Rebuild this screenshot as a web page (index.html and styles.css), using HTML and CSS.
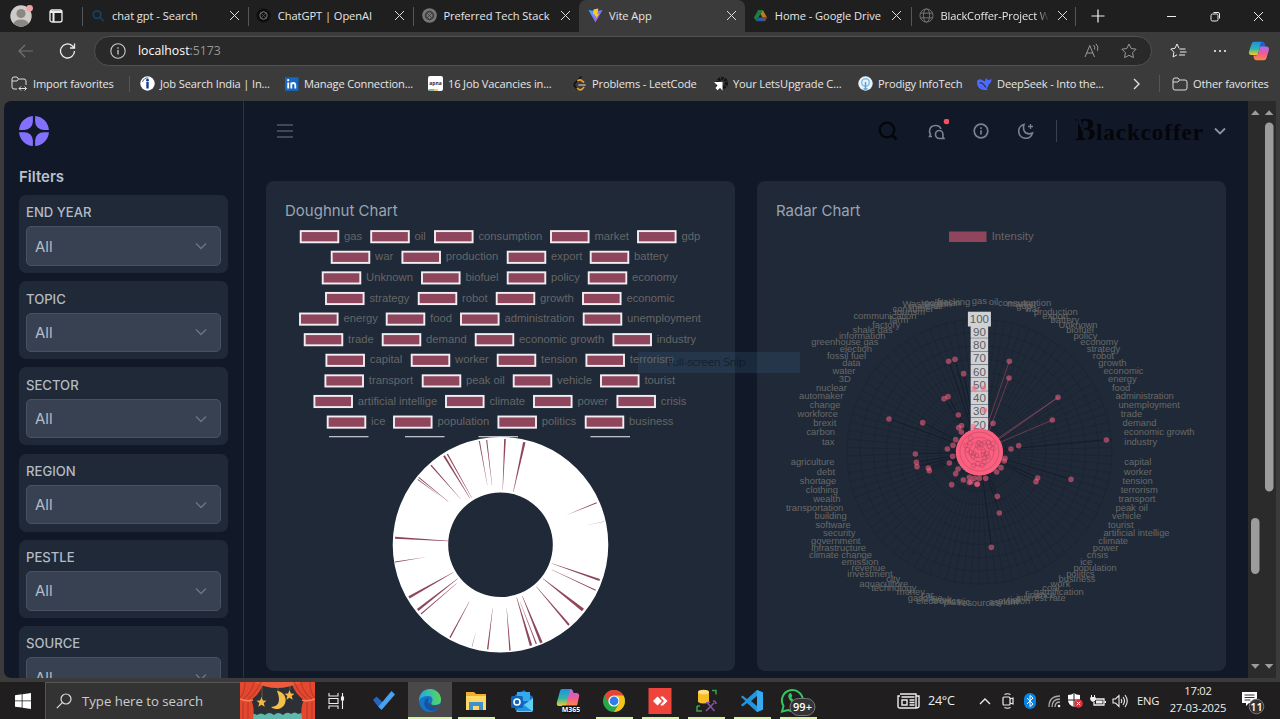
FILE: index.html
```html
<!DOCTYPE html>
<html lang="en">
<head>
<meta charset="utf-8">
<title>Vite App</title>
<link rel="stylesheet" href="styles.css">
</head>
<body>
<div class="screen">
  <header class="tabs">
    <div class="tabs-start">
      <svg width="24" height="24" viewBox="0 0 24 24"><circle cx="12" cy="12" r="10.7" fill="#cfccc8"/><circle cx="12" cy="9.5" r="4.6" fill="#8b8784"/><path d="M4.500 19.500Q6 15.500 12 15.500T19.500 19.500Q16 22.500 12 22.500T4.500 19.500" fill="#8b8784"/><circle cx="20.600" cy="4.300" r="3.300" fill="#f1a3a3"/></svg>
      <svg class="workspaces" width="14" height="14" viewBox="0 0 14 14" fill="none" stroke="#eee" stroke-width="1.300"><rect x="1" y="1" width="12" height="12" rx="2"/><path d="M1 3h12M4.500 4v9" stroke-width="2"/></svg>
    </div>
    <div class="tab"><svg class="ti" viewBox="0 0 16 16" fill="none" stroke="#163f60" stroke-width="2"><circle cx="6.500" cy="7" r="4"/><path d="M9.500 10l4 4"/></svg><span class="tt">chat gpt - Search</span><i class="x"></i></div>
    <div class="tab"><svg class="ti" viewBox="0 0 16 16"><circle cx="8" cy="8" r="7.500" fill="#0e0e0e"/><g fill="none" stroke="#666"><circle cx="8" cy="8" r="4"/><path d="M8 4l3.500 2v4L8 12l-3.500-2V6zM5 5l6 6M11 5l-6 6" stroke-width=".7"/></g></svg><span class="tt">ChatGPT | OpenAI</span><i class="x"></i></div>
    <div class="tab nosep"><svg class="ti" viewBox="0 0 16 16"><circle cx="8" cy="8" r="7.800" fill="#777"/><g fill="none" stroke="#333"><circle cx="8" cy="8" r="4.500"/><path d="M8 4l3.500 2v4L8 12l-3.500-2V6zM5 5l6 6M11 5l-6 6" stroke-width=".8"/></g></svg><span class="tt">Preferred Tech Stack</span><i class="x"></i></div>
    <div class="tab active"><svg class="ti" viewBox="0 0 16 16"><defs><linearGradient id="v" x1="0" y1="0" x2="1" y2="1"><stop offset="0" stop-color="#35b7ff"/><stop offset="1" stop-color="#bd34fe"/></linearGradient></defs><path d="M.5 2L8 15.500 15.500 2 8 3.500z" fill="url(#v)"/><path d="M11 .5L5.800 1.500 5.500 7l2-.4L7 9l1.800-.4L8 12l4-6-2 .3z" fill="#ffc91c"/></svg><span class="tt">Vite App</span><i class="x"></i></div>
    <div class="tab"><svg class="ti" viewBox="0 0 16 16"><path d="M5.500 2h5L8 6.500 3.500 14 1 10z" fill="#1e7d45"/><path d="M10.500 2L15 10h-5L8 6.500z" fill="#b5801c"/><path d="M6 10h9l-2.500 4h-9z" fill="#2c5ca5"/><path d="M11.500 10H15l-2.500 4z" fill="#a3382f"/></svg><span class="tt">Home - Google Drive</span><i class="x"></i></div>
    <div class="tab last"><svg class="ti" viewBox="0 0 16 16" fill="none" stroke="#777"><circle cx="8" cy="8" r="7"/><ellipse cx="8" cy="8" rx="3.300" ry="7"/><path d="M1.500 5.500h13M1.500 10.500h13"/></svg><span class="tt fade">BlackCoffer-Project W</span><i class="x"></i></div>
    <svg class="plus" width="14" height="14" viewBox="0 0 14 14" stroke="#eee" stroke-width="1.200"><path d="M7 .5v13M.5 7h13"/></svg>
    <div class="win">
      <svg width="11" height="11" viewBox="0 0 11 11" stroke="#eee"><path d="M1 5.500h9"/></svg>
      <svg width="11" height="11" viewBox="0 0 11 11" fill="none" stroke="#eee"><rect x="1" y="3" width="7" height="7" rx="1.500"/><path d="M3.500 1.500H8Q9.500 1.500 9.500 3v4.500"/></svg>
      <svg width="11" height="11" viewBox="0 0 11 11" stroke="#eee"><path d="M1 1l9 9M10 1l-9 9"/></svg>
    </div>
  </header>

  <div class="toolbar">
    <svg class="back" width="18" height="16" viewBox="0 0 18 16" fill="none" stroke="#737373" stroke-width="1.200"><path d="M16 8H2M8 2L2 8l6 6"/></svg>
    <svg class="reload" width="18" height="18" viewBox="0 0 18 18" fill="none" stroke="#eee" stroke-width="1.300"><path d="M15.500 9a7 7 0 1 1-2.300-5.200L15.300 6"/><path d="M15.500 1.500V6H11"/></svg>
    <div class="address">
      <svg width="16" height="16" viewBox="0 0 16 16" fill="none" stroke="#ccc" stroke-width="1.100"><circle cx="8" cy="8" r="7.200"/><path d="M8 7v4.500M8 4.300v1.400" stroke-width="1.300"/></svg>
      <span class="url">localhost<b>:5173</b></span>
      <svg class="aloud" width="16" height="16" viewBox="0 0 16 16" fill="none" stroke="#999"><path d="M1 14L5.800 2.500 10.500 14M2.600 10h6.500M9.500 2q2 2 1 4.500M12 .8q3 3 1.500 7"/></svg>
      <svg width="16" height="16" viewBox="0 0 16 16" fill="none" stroke="#999"><path d="M8 1l2.200 4.500 4.900.7-3.500 3.500.8 4.900L8 12.300l-4.400 2.300.8-4.900L.9 6.200l4.900-.7z"/></svg>
    </div>
    <svg class="favs" width="17" height="16" viewBox="0 0 17 16" fill="none" stroke="#eee"><path d="M9 5.300L7 1 5 5.300.8 6l3.100 3.200-.8 4.800L7 11.800M9.500 6h6M10 9h6.500M9 12h6"/></svg>
    <svg class="dots" width="14" height="4" viewBox="0 0 14 4" fill="#eee"><circle cx="2" cy="2" r="1.100"/><circle cx="7" cy="2" r="1.100"/><circle cx="12" cy="2" r="1.100"/></svg>
    <svg class="copilot" width="22" height="20" viewBox="0 0 22 20"><defs><linearGradient id="c1" x2="0" y2="1"><stop stop-color="#1793e8"/><stop offset=".55" stop-color="#35b5a0"/><stop offset="1" stop-color="#f6cb2c"/></linearGradient><linearGradient id="c2" x2="0" y2="1"><stop stop-color="#a66cf0"/><stop offset=".5" stop-color="#f05a9a"/><stop offset="1" stop-color="#ff8a3c"/></linearGradient></defs><path d="M6 .8h8q2 0 2.600 2l.7 2.600h-3q-2 0-2.600 2L9.500 14H3.300Q.5 14 1 10.500L3.500 3Q4.200.8 6 .8" fill="url(#c1)"/><path d="M14 .8q2 0 2.600 2l.7 2.600h-3q-2 0-2.600 2L12 3z" fill="#1c62c8"/><path d="M16 19.200H8.500q-2 0-2.600-2l-.5-2.600h2.200q2 0 2.600-2l2.200-7h6q3 0 2.500 3.500L18.500 17q-.7 2.200-2.500 2.200" fill="url(#c2)"/></svg>
  </div>

  <nav class="bookmarks">
    <div><svg width="17" height="15" viewBox="0 0 17 15" fill="none" stroke="#ddd"><path d="M6 13H3Q1 13 1 11V3Q1 1 3 1h3l1.500 2H13q2 0 2 2v4M1 5h5l1.500-2M8 12.500h7.500M10 10.500l-2 2 2 2M13.500 10.500l2 2-2 2"/></svg><span>Import favorites</span><i class="bar"></i></div>
    <div><svg width="15" height="15" viewBox="0 0 15 15"><circle cx="7.500" cy="7.500" r="7.200" fill="#fff"/><path d="M7.500 6v6.500" stroke="#163d8c" stroke-width="2.400"/><circle cx="7.500" cy="4.200" r="1.400" fill="#163d8c"/><path d="M2.500 6Q4 1.300 8.500 2" fill="none" stroke="#3a65b5"/></svg><span>Job Search India | In...</span></div>
    <div><svg width="14" height="14" viewBox="0 0 14 14"><rect width="13.500" height="13.500" y=".3" fill="#1369c4"/><path d="M3.200 5.500v6M6.300 5.500v6M6.300 8q.2-2 2-2t2 2v3.500" fill="none" stroke="#fff" stroke-width="1.800"/><circle cx="3.200" cy="3.200" r="1.100" fill="#fff"/></svg><span>Manage Connection...</span></div>
    <div><svg width="15" height="15" viewBox="0 0 15 15"><rect width="15" height="15" rx="2" fill="#fff"/><path d="M1 14h5" stroke="#2db58c" stroke-width="1.500"/><path d="M6 14h4" stroke="#f0b33e" stroke-width="1.500"/><text x="7.500" y="9" class="apna">apna</text></svg><span>16 Job Vacancies in...</span></div>
    <div><svg width="14" height="15" viewBox="0 0 14 15" fill="none" stroke-linecap="round" stroke-width="1.700"><path d="M8 1L2 7Q.5 9 2 10.500l2 2.500" stroke="#111"/><path d="M5 4.500q2-1.500 4 .3l1.500 1.200M4.500 12.500q2.500 2.500 4.700.5l1.500-1.500" stroke="#f0a020"/><path d="M6 9h6" stroke="#aaa"/></svg><span>Problems - LeetCode</span></div>
    <div><svg width="14" height="15" viewBox="0 0 14 15"><circle cx="8" cy="7" r="4.500" fill="none" stroke="#151515" stroke-width="3.500" stroke-dasharray="2.500 .8"/><path d="M0 6h8.500v8.500L6 12l-2.500 2.300L1.500 12 3.500 9.500z" fill="#fff"/></svg><span>Your LetsUpgrade C...</span></div>
    <div><svg width="15" height="15" viewBox="0 0 15 15"><circle cx="7.500" cy="7.500" r="7.200" fill="#e8f2fb"/><circle cx="7.500" cy="6.500" r="3.800" fill="none" stroke="#87bee8" stroke-width="1.500"/><path d="M7.500 6v7M5.500 13h4" stroke="#5d9ed3" stroke-width="1.500"/></svg><span>Prodigy InfoTech</span></div>
    <div><svg width="16" height="14" viewBox="0 0 16 14"><path d="M1 4Q3 1 6 3l3 1.500Q9 2 10.500 1q.5 2 2 2.200L15.500 2q0 4-2.500 5-.5 3-2.500 4.200l1.500 1.500Q6 14 3 11 .5 8 1 4" fill="#4d6bfe"/><path d="M3.500 6q3-1 6.500 4.500" fill="none" stroke="#333" stroke-width="1.200"/></svg><span>DeepSeek - Into the...</span></div>
    <div class="more"><svg width="10" height="12" viewBox="0 0 10 12" fill="none" stroke="#ddd" stroke-width="1.400"><path d="M2 1l5 5-5 5"/></svg></div>
    <div class="other"><svg width="16" height="14" viewBox="0 0 16 14" fill="none" stroke="#ddd"><path d="M1 3Q1 1 3 1h3l1.500 2H13q2 0 2 2v6q0 2-2 2H3q-2 0-2-2zM1 5h5l1.500-2"/></svg><span>Other favorites</span></div>
  </nav>

  <div class="viewport">
    <aside class="sidebar">
      <svg class="logo" width="30" height="30" viewBox="0 0 32 32"><path fill="#8470ff" d="M31.956 14.800C31.372 6.920 25.080.628 17.200.044V5.760a9.040 9.040 0 0 0 9.040 9.040h5.716ZM14.800 26.240v5.716C6.920 31.372.630 25.080.044 17.200H5.760a9.040 9.040 0 0 1 9.040 9.040Zm11.440-9.040h5.716c-.584 7.880-6.876 14.172-14.756 14.756V26.240a9.040 9.040 0 0 1 9.040-9.040ZM.044 14.800C.630 6.920 6.920.628 14.800.044V5.760a9.040 9.040 0 0 1-9.040 9.040H.044Z"/></svg>
      <h2>Filters</h2>
      <div class="filter"><label>END YEAR</label><div class="select">All<svg class="chev" viewBox="0 0 12 8"><path d="M1 1.500l5 5 5-5"/></svg></div></div>
      <div class="filter"><label>TOPIC</label><div class="select">All<svg class="chev" viewBox="0 0 12 8"><path d="M1 1.500l5 5 5-5"/></svg></div></div>
      <div class="filter"><label>SECTOR</label><div class="select">All<svg class="chev" viewBox="0 0 12 8"><path d="M1 1.500l5 5 5-5"/></svg></div></div>
      <div class="filter"><label>REGION</label><div class="select">All<svg class="chev" viewBox="0 0 12 8"><path d="M1 1.500l5 5 5-5"/></svg></div></div>
      <div class="filter"><label>PESTLE</label><div class="select">All<svg class="chev" viewBox="0 0 12 8"><path d="M1 1.500l5 5 5-5"/></svg></div></div>
      <div class="filter"><label>SOURCE</label><div class="select">All<svg class="chev" viewBox="0 0 12 8"><path d="M1 1.500l5 5 5-5"/></svg></div></div>
    </aside>
    <main class="content">
      <div class="topbar">
        <svg class="menu" width="16" height="14" viewBox="0 0 16 14" stroke="#515a69" stroke-width="1.500"><path d="M0 1h16M0 7h16M0 13h16"/></svg>
        <svg class="find" width="20" height="20" viewBox="0 0 20 20" fill="none" stroke="#04060b" stroke-width="2.200"><circle cx="9" cy="9" r="7.300"/><path d="M14.500 14.500l4 4" stroke-width="2.800"/></svg>
        <svg class="chat" width="24" height="24" viewBox="0 0 24 24" fill="none" stroke="#7b8391" stroke-width="1.600"><path d="M7 17.500H4.500l1-2.300Q4.300 13.500 4.500 12 5 6.500 10.500 6.500q4.300 0 5.500 3.500"/><path d="M10.500 15.200a3.700 3.700 0 0 1 7.400 0V18l1 1.500h-4.500A3.900 3.900 0 0 1 10.500 15.200z"/><circle cx="21.500" cy="2.500" r="2.800" fill="#f4525c" stroke="none"/></svg>
        <svg class="info" width="16" height="16" viewBox="0 0 16 16" fill="none" stroke="#7b8391" stroke-width="1.700"><circle cx="8" cy="8" r="6.800"/><path d="M8 7.300v4.200M8 4.300v1.800"/></svg>
        <svg class="moon" width="17" height="16" viewBox="0 0 17 16" fill="none" stroke="#7b8391" stroke-width="1.600"><path d="M6 1.500A7 7 0 1 0 14.500 10Q8 12.500 6 7.500 5 4 6 1.500z"/><path d="M12.500 1v5M10 3.500h5" stroke-width="1.300"/></svg>
        <i class="rule"></i>
        <div class="brand"><span class="b">B</span><span>lackcoffer</span></div>
        <svg class="caret" viewBox="0 0 12 8"><path d="M1 1.500l5 5 5-5"/></svg>
      </div>
      <div class="cards">
        <section class="card"><h3>Doughnut Chart</h3><svg id="doughnut" viewBox="266 225 469 445" width="469" height="445"></svg></section>
        <section class="card"><h3>Radar Chart</h3><svg id="radar" viewBox="757 225 469 445" width="469" height="445"></svg></section>
      </div>
    </main>
    <div class="scrolls">
      <svg width="32" height="577" viewBox="1248 101 32 577" fill="#9c9c9c"><path d="M1251 115l4.300-4.800 4.300 4.800zM1264.800 115l4.300-4.800 4.300 4.800zM1251 664l4.300 4.800 4.300-4.800zM1264.800 664l4.300 4.800 4.300-4.800z"/><rect x="1251" y="518" width="8.500" height="56" rx="4.200"/><rect x="1265" y="122.500" width="8.500" height="369" rx="4.200"/></svg>
    </div>
  </div>

  <footer class="taskbar">
    <div class="start"><svg width="16" height="16" viewBox="0 0 16 16" fill="#fff"><path d="M0 2.200L6.700 1.300v6.200H0zM7.500 1.200L16 0v7.500H7.500zM0 8.300h6.700v6.300L0 13.700zM7.500 8.300H16V16l-8.500-1.200z"/></svg></div>
    <div class="search">
      <svg width="16" height="16" viewBox="0 0 16 16" fill="none" stroke="#ddd" stroke-width="1.200"><circle cx="10" cy="6" r="5"/><path d="M6.300 9.700L.8 15.200"/></svg>
      <span>Type here to search</span>
      <svg class="scene" width="75" height="37" viewBox="0 0 75 37"><rect width="75" height="37" fill="#2d3035"/><path d="M22 0v16M38 0v10M50 0v8" stroke="#8a6c2b" stroke-width=".7"/><path d="M37 9a9 9 0 1 1-6 16q12-1 6-16" fill="#f3c14a"/><path id="star" d="M21.500 15l1.400 3.500 3.600.3-2.800 2.300 1 3.700-3.200-2-3.200 2 1-3.700-2.800-2.300 3.600-.3z" fill="#f6b83e"/><use href="#star" x="28" y="-7"/><path d="M9 37v-3q4-4 8-1 4-3 8 0 4-4 9 0 4-4 9 0 4-4 8-1 4-3 7 0 4-2 7 1v4z" fill="#5fb8ac"/><path d="M0 0h24Q20 12 11 18q4 7 2 19H0z" fill="#e4492f"/><path d="M75 0H51q4 12 13 18-4 7-2 19h13z" fill="#e4492f"/><path d="M14 0h47Q37 12 14 0" fill="#ee5a3c"/><path d="M5 0q0 11-5 16M14 0q-2 11-11 17M21 0q-5 11-13 17M3 20v17M8 20v17M70 0q0 11 5 16M61 0q2 11 11 17M54 0q5 11 13 17M67 20v17M72 20v17" fill="none" stroke="#c0392a" stroke-width="1.200"/><path d="M0 17q7 3 13 1M75 17q-7 3-13 1" fill="none" stroke="#f78058" stroke-width="1.500"/></svg>
    </div>
    <div class="apps">
      <div class="app"><svg width="17" height="18" viewBox="0 0 17 18" fill="none" stroke="#eee" stroke-width="1.100"><path d="M1 1v3h9V1M1 17v-3h9v3M1 6.500h9v5H1zM14.500 1v16"/><path d="M13.500 5h2v3h-2z" fill="#eee"/></svg></div>
      <div class="app"><svg width="24" height="22" viewBox="0 0 24 22"><path d="M1 10l3.500-3.500 7 6.500-3.500 6z" fill="#2565bd"/><path d="M19.500 1L23 4.500 9.500 20 6.500 16.500z" fill="#48a2ef"/></svg></div>
      <div class="app on current"><svg width="24" height="24" viewBox="0 0 24 24"><defs><linearGradient id="e1"><stop stop-color="#21a9e8"/><stop offset="1" stop-color="#58d65b"/></linearGradient></defs><circle cx="12" cy="12" r="11" fill="#1275ca"/><path d="M1 12A11 11 0 0 1 23 10q.5 6-6 6-5 0-3-3 2-6-4-6Q3 7 1 12" fill="url(#e1)"/><path d="M7 11Q4 19 13 22q5 0 8-4-9 2-11-5-.5-2 1-4-3 0-4 2" fill="#1554a0"/><path d="M13 13q-2 3 3 3.500 3 .3 6-1.500L21 18q-8 2-10-3z" fill="#4a4a4b"/></svg></div>
      <div class="app on"><svg width="22" height="20" viewBox="0 0 22 20"><path d="M1 1h8l2 2h10v16H1z" fill="#f1ae2c"/><path d="M1 5h20v14H1z" fill="#ffd766"/><path d="M4 19v-8h14v8h-4v-4H8v4z" fill="#3e91cc"/></svg></div>
      <div class="app"><svg width="24" height="24" viewBox="0 0 24 24"><path d="M5 6l9-5 9 7v13H5z" fill="#1670c4"/><path d="M7 3h13v9H7z" fill="#36a8ee"/><path d="M6 22L23 9v12q0 2-2 2H7z" fill="#60cff2"/><path d="M6 10l16 12H8z" fill="#2093df"/><rect x="1" y="7" width="12" height="12" rx="1.500" fill="#1264b8"/><circle cx="7" cy="13" r="3" fill="none" stroke="#fff" stroke-width="1.600"/></svg></div>
      <div class="app"><svg width="24" height="26" viewBox="0 0 24 26"><path d="M6 1h8q2 0 2 3l-5 14H3q-3 0-2-4L4 3q.6-2 2-2" fill="url(#c1)"/><path d="M14 1q3 0 3.500 4H20q4 0 3 4l-2 9H10z" fill="url(#c2)"/><rect x="6" y="17.500" width="18" height="8" fill="#111"/><text x="15" y="24" class="m365">M365</text></svg></div>
      <div class="app on"><svg width="24" height="24" viewBox="0 0 24 24"><circle cx="12" cy="12" r="11" fill="#28a64a"/><path d="M2.500 6.500A11 11 0 0 1 21.500 6.500H12A5.500 5.500 0 0 0 7 14.500z" fill="#e94335"/><path d="M21.500 6.500A11 11 0 0 1 12 23l5-8.300A5.500 5.500 0 0 0 12 6.500z" fill="#fbc116"/><circle cx="12" cy="12" r="5.600" fill="#fff"/><circle cx="12" cy="12" r="4.400" fill="#2f7de9"/></svg></div>
      <div class="app on"><svg width="24" height="26" viewBox="0 0 24 26"><rect width="23" height="26" x=".5" fill="#ef443b"/><path d="M9.500 8.500l4.500 4.500-4.500 4.500L5 13zM13 8.500h2l4.500 4.500-4.500 4.500h-2l-.5-.8 3.500-3.700-3.500-3.700z" fill="#fff"/></svg></div>
      <div class="app on"><svg width="23" height="24" viewBox="0 0 23 24"><path d="M3 3v10q5 3 11 0V3" fill="#f5bd27"/><ellipse cx="8.500" cy="3" rx="5.500" ry="2.300" fill="#ffe07a"/><path d="M17 1.500h4v4M2 17v5h5M5 17H2" fill="none" stroke="#38a34d" stroke-width="1.500"/><path d="M12.500 14l7 8M19 14l-8 8M11 14l4-1M18 12q3 0 3 3" fill="none" stroke="#8750aa" stroke-width="1.600"/></svg></div>
      <div class="app on"><svg width="24" height="24" viewBox="0 0 24 24"><path d="M17 1l6 2.500v17L17 23 7 14l-4.500 3.500L1 16l4.500-4L1 8l1.500-1.500L7 10zM17 7l-6 5 6 5z" fill="#2196e0" fill-rule="evenodd"/><path d="M17 1l6 2.500v17L17 23z" fill="#36aaf3"/></svg></div>
      <div class="app on"><svg width="38" height="30" viewBox="0 0 38 30"><path d="M4.500 20A10.500 10.500 0 1 1 9 24L3 25.500z" fill="none" stroke="#31c65f" stroke-width="2"/><path d="M10 8q1-2 2.500 0l.8 2-1 1.500q2 3 4 3.500l2-1 2 2q0 2-3 2-6-1-8-7-.3-2 .7-3" fill="#31c65f"/><rect x="11" y="12.500" width="25" height="17" rx="8.500" fill="#343434" stroke="#777"/><text x="23.500" y="25" class="badge">99+</text></svg></div>
    </div>
    <div class="tray">
      <svg width="23" height="16" viewBox="0 0 23 16" fill="none" stroke="#eee" stroke-width="1.400"><path d="M3 1h16v14H3q-2 0-2-2V3h2M19 3h3v10q0 2-3 2M4.500 4h13M5 7h5v5H5zM12.500 7h5M12.500 9.500h5M12.500 12h5"/></svg>
      <span class="temp">24°C</span>
      <svg class="up" width="12" height="8" viewBox="0 0 12 8" fill="none" stroke="#eee" stroke-width="1.300"><path d="M1 7l5-5 5 5"/></svg>
      <svg class="cam" width="12" height="16" viewBox="0 0 12 16" fill="none" stroke="#eee" stroke-width="1.200"><rect x="1" y="4" width="7" height="8" rx="1"/><path d="M8 6l3-1v6l-3-1M2.500 1.500q3-1.500 6 0M2.500 14.500q3 1.500 6 0"/></svg>
      <svg class="bt" width="12" height="16" viewBox="0 0 12 16"><rect width="12" height="16" rx="6" fill="#0785e4"/><path d="M3 5l6 6-3 2.500v-11L9 5l-6 6" fill="none" stroke="#fff"/></svg>
      <svg class="wifi" width="13" height="14" viewBox="0 0 13 14" fill="none" stroke="#aaa" stroke-width="1.300"><path d="M1 13Q1 2 12 2M4 13q0-8 8-8M7 13q0-5 5-5"/><circle cx="11" cy="12" r="1.300" fill="#eee" stroke="none"/></svg>
      <svg class="def" width="15" height="15" viewBox="0 0 15 15"><path d="M0 2q4 0 6-2 2 2 6 2v5q0 5-6 7-6-2-6-7z" fill="#fff"/><path d="M6 0v14M0 7h12" stroke="#222"/><circle cx="10.500" cy="10.500" r="4.300" fill="#dc333d"/><path d="M8.800 8.800l3.400 3.400M12.200 8.800l-3.400 3.400" stroke="#fff"/></svg>
      <svg class="bat" width="16" height="13" viewBox="0 0 16 13"><path d="M3 5h11v6H4V8" fill="none" stroke="#eee" stroke-width="1.300"/><path d="M6 6.500h6.500v3H6zM14.500 7h1.500v2h-1.500zM1 1h1v2h2V1h1v2q1 0 1 2-1 3-3 3T0 5q0-2 1-2z" fill="#eee"/></svg>
      <svg class="vol" width="16" height="14" viewBox="0 0 16 14" fill="none" stroke="#eee" stroke-width="1.100"><path d="M1 5h2.500L7 1.500v11L3.500 9H1zM9 5q1.500 2 0 4M11 3q3 4 0 8M13 1q4.500 6 0 12"/></svg>
      <span class="lang">ENG</span>
      <div class="clock"><span>17:02</span><span>27-03-2025</span></div>
      <svg class="note" width="24" height="26" viewBox="0 0 24 26"><path d="M1 2h15v11H8l-3 3v-3H1z" fill="#fff"/><path d="M3.500 5h10M3.500 7.500h10M3.500 10h6" stroke="#333"/><circle cx="15.500" cy="16.500" r="7.300" fill="#333" stroke="#777"/><text x="15.500" y="20.500" class="badge">11</text></svg>
    </div>
  </footer>
  <div class="tooltip">Full-screen Snip</div>
</div>
<script src="charts.js"></script>
</body>
</html>
```

FILE: styles.css
```css
* { box-sizing: border-box; }
body { margin: 0; background: #3b3b3b; }
svg { display: block; flex: none; }
.screen { position: relative; width: 1280px; height: 719px; overflow: hidden; display: flex; flex-direction: column; font-family: "Open Sans", sans-serif; color: #e6e6e6; }

.tabs { height: 32px; flex: none; background: #1f1f1f; display: flex; }
.tabs-start { width: 82px; display: flex; align-items: center; padding-left: 9px; gap: 16px; }
.tab { width: 165.7px; position: relative; display: flex; align-items: center; padding: 0 9px 1px 7.500px; border-left: 1px solid transparent; background: linear-gradient(#555, #555) 0 7px / 1px 19px no-repeat; background-origin: border-box; }
.ti { width: 15px; height: 15px; }
.tt { font-size: 11.1px; letter-spacing: -.05px; margin-left: 6.500px; width: 117.500px; white-space: nowrap; }
.fade { width: 109px; margin-right: 8.500px; -webkit-mask-image: linear-gradient(90deg, #000 88%, transparent); mask-image: linear-gradient(90deg, #000 88%, transparent); letter-spacing: -.12px; }
.active { background: #3b3b3b; border-radius: 7px 7px 0 0; }
.active + .tab { background: none; }
.last { background: linear-gradient(#555, #555) 0 7px / 1px 19px no-repeat, linear-gradient(#555, #555) 100% 7px / 1px 19px no-repeat; }
.x { width: 9px; height: 9px; flex: none; background: linear-gradient(45deg, transparent 46%, #ddd 46%, #ddd 54%, transparent 54%), linear-gradient(-45deg, transparent 46%, #ddd 46%, #ddd 54%, transparent 54%); }
.plus { margin: 8.500px 0 0 14.500px; }
.win { display: flex; gap: 32.500px; align-items: center; margin-left: 61.500px; }

.toolbar { height: 37px; flex: none; display: flex; align-items: center; padding-left: 17px; background: #3b3b3b; }
.reload { margin-left: 24px; }
.address { width: 1058px; height: 30px; margin-left: 17px; border: 1.500px solid #515151; border-radius: 15px; background: #292929; display: flex; align-items: center; padding: 0 14px 0 15px; }
.url { flex: 1; font-size: 12.300px; margin-left: 12px; color: #fff; }
.url b { font-weight: 400; color: #969696; }
.aloud { margin-right: 21px; }
.favs { margin-left: 18px; }
.dots { margin-left: 26px; }
.copilot { margin-left: 21px; }

.bookmarks { height: 32px; flex: none; padding: 0 0 3px 11px; display: grid; grid-template-columns: 129px 145px 143px 145px 141px 144px 118px 156px 28px auto; align-items: center; font-size: 11.100px; letter-spacing: -.15px; background: #3b3b3b; }
.bookmarks > div { display: flex; align-items: center; gap: 5px; white-space: nowrap; height: 17px; }
.bookmarks .bar { width: 1px; height: 16px; background: #555; margin-left: 10px; }
.more { border-right: 1px solid #555; }
.bookmarks .other { padding-left: 12px; }
.apna { font: bold 5px "Open Sans", sans-serif; fill: #402040; text-anchor: middle; letter-spacing: 0; }

.viewport { height: 577px; flex: none; display: flex; margin-left: 4px; border-radius: 7px 0 0 7px; overflow: hidden; background: #111827; font-family: Inter, sans-serif; }
.sidebar { width: 240px; flex: none; border-right: 1px solid #2b3341; padding: 15px 15px 0; overflow: hidden; }
.sidebar h2 { margin: 21px 0 9px; font-size: 15px; line-height: 19px; font-weight: 600; color: #b9c0ca; }
.filter { width: 209px; height: 78px; margin-bottom: 8.200px; border-radius: 7px; background: #1f2937; padding: 8.400px 7.500px 7px 7px; }
.filter label { display: block; font-size: 13.100px; line-height: 19px; font-weight: 500; color: #b4bbc5; }
.select { height: 39.500px; margin-top: 4px; border: 1px solid #495262; border-radius: 5px; background: #384151; display: flex; align-items: center; justify-content: space-between; padding: 0 13px 0 8px; font-size: 15px; color: #b4bbc6; }
.chev, .caret { width: 12px; height: 8px; fill: none; stroke: #6b7482; stroke-width: 1.500; }
.content { flex: 1; min-width: 0; }
.topbar { height: 60px; display: flex; align-items: center; padding-left: 33px; }
.find { margin-left: 585px; }
.chat { margin-left: 27px; }
.info { margin-left: 24px; }
.moon { margin-left: 29px; }
.rule { width: 1px; height: 22px; background: #38404e; margin-left: 21px; }
.brand { margin-left: 18px; width: 132px; display: flex; align-items: baseline; font: bold 23px/30px "Liberation Serif", serif; letter-spacing: .95px; color: #04060b; }
.brand .b { font-size: 31px; width: 21px; letter-spacing: 0; background: linear-gradient(68deg, transparent 38%, #111827 38%, #111827 48%, transparent 48%), #04060b; -webkit-background-clip: text; background-clip: text; color: transparent; }
.caret { margin-left: 7px; stroke: #8a929e; stroke-width: 1.800; }
.cards { margin: 20px 0 0 22px; display: flex; gap: 22px; }
.card { width: 469px; height: 490px; border-radius: 8px; background: #1f2937; overflow: hidden; }
.card h3 { margin: 0; height: 44px; padding: 20px 19px 0; font-size: 15px; line-height: 20px; font-weight: 400; color: #9aa4b3; }
.legend { font: 11.250px "Liberation Sans", sans-serif; fill: #666; }
.swatch { fill: #8f465c; stroke: #f2eff2; stroke-width: 1.900; }
.swatch.plain { stroke: none; }
.cutline { fill: #bcc0c6; }
.ring { fill: #fff; }
.slice { fill: #8f465c; }
.grid { fill: none; stroke: #000; stroke-opacity: .1; stroke-width: .94; }
.point-label { font: 9.380px "Liberation Sans", sans-serif; fill: #696969; }
.tick-box { fill: #cfd1d4; }
.tick { font: 11.500px "Liberation Sans", sans-serif; fill: #5e5e5e; text-anchor: middle; }
.dot { fill: #ff6384; fill-opacity: .55; }
.spike { fill: none; stroke: #bd4f70; stroke-opacity: .55; stroke-width: .9; }
.spoke-shade { stroke: #111827; stroke-opacity: .6; stroke-width: 1; }
.core { fill: #fb6080; }
.core-line { fill: none; stroke: #bc4965; stroke-opacity: .7; stroke-width: .9; }
.scrolls { width: 32px; flex: none; background: linear-gradient(90deg, #2b2b2b 28px, #3b3b3b 28px); }

.taskbar { height: 37px; margin-top: 4px; flex: none; background: #201e1f; display: flex; position: relative; }
.start { width: 45px; display: flex; align-items: center; justify-content: center; }
.search { width: 270px; display: flex; align-items: center; background: #333; border-top: 1px solid #555; border-left: 1px solid #555; padding-left: 10px; font-size: 13.200px; letter-spacing: -.02px; color: #ccc; }
.search span { width: 157px; margin-left: 10px; white-space: nowrap; }
.search .scene { margin: -1px 0 0 16px; }
.apps { display: flex; width: 582px; padding-left: 1px; }
.app { width: 44px; margin-right: 2.100px; flex: none; display: flex; align-items: center; justify-content: center; background: no-repeat center bottom / 37px 2px; padding-right: 1px; }
.app:first-child { padding-right: 3px; }
.app:nth-child(2) { padding-right: 0; }
.on { background-image: linear-gradient(#d8f4a2, #d8f4a2); }
.current { background-color: #4a4849; background-size: 44px 2px; padding: 0; }
.m365 { font: bold 7px "Open Sans", sans-serif; fill: #fff; text-anchor: middle; }
.badge { font: 600 11px "Open Sans", sans-serif; fill: #fff; text-anchor: middle; }
.tray { display: flex; align-items: center; font-size: 11.200px; color: #eee; white-space: nowrap; }
.temp { font-size: 12.600px; width: 29px; margin-left: 8px; letter-spacing: -.3px; }
.up { margin-left: 22px; }
.cam { margin-left: 11px; }
.bt { margin-left: 10px; }
.wifi { margin-left: 12px; }
.def { margin-left: 7px; }
.bat { margin-left: 7px; }
.vol { margin-left: 6px; }
.lang { margin-left: 9px; width: 22px; letter-spacing: -.2px; }
.clock { width: 56px; margin-left: 11px; display: flex; flex-direction: column; align-items: center; line-height: 17px; letter-spacing: -.2px; margin-top: -3px; }
.note { margin: 4px 0 0 15px; }
.tooltip { position: absolute; left: 638px; top: 352px; width: 162px; height: 21px; padding-left: 29px; background: rgba(72, 112, 152, .2); font: 11.200px/21px "DejaVu Sans", sans-serif; letter-spacing: -.65px; color: rgba(10, 18, 32, .6); }
```

FILE: charts.js
```js
const NS = 'http://www.w3.org/2000/svg';
function add(parent, tag, attrs, text) {
  const el = document.createElementNS(NS, tag);
  for (const k in attrs) el.setAttribute(k, attrs[k]);
  if (text !== undefined) el.textContent = text;
  parent.appendChild(el);
  return el;
}

const doughnut = document.getElementById('doughnut');
const legendRows = [
  [['gas', 300], ['oil', 370.5], ['consumption', 434.3], ['market', 550.3], ['gdp', 637.3]],
  [['war', 331], ['production', 401.7], ['export', 507], ['battery', 590]],
  [['Unknown', 322], ['biofuel', 421.3], ['policy', 507], ['economy', 588]],
  [['strategy', 325.3], ['robot', 418], ['growth', 496], ['economic', 582.3]],
  [['energy', 299.3], ['food', 386], ['administration', 460.3], ['unemployment', 583]],
  [['trade', 304], ['demand', 382], ['economic growth', 475], ['industry', 612.7]],
  [['capital', 325.7], ['worker', 411], ['tension', 497], ['terrorism', 585.7]],
  [['transport', 324.7], ['peak oil', 422], ['vehicle', 513], ['tourist', 600.3]],
  [['artificial intellige', 313.7], ['climate', 445.3], ['power', 533.3], ['crisis', 616.7]],
  [['ice', 327], ['population', 393.3], ['politics', 497.7], ['business', 585]]
];
legendRows.forEach((row, r) => {
  const y = 230.2 + r * 20.6;
  row.forEach(([name, x]) => {
    add(doughnut, 'rect', { class: 'swatch', x: x + .7, y: y + .9, width: 37.6, height: 11.2 });
    add(doughnut, 'text', { class: 'legend', x: x + 44.1, y: y + 9.6 }, name);
  });
});
[329, 405, 478.5, 590.5].forEach(x => add(doughnut, 'rect', { class: 'cutline', x, y: 436, width: 39.5, height: 1.3 }));

add(doughnut, 'path', { class: 'ring', 'fill-rule': 'evenodd',
  d: 'M392.700 544.700a107.800 107.800 0 1 0 215.600 0a107.800 107.800 0 1 0 -215.600 0M448.200 544.700a52.300 52.300 0 1 0 104.600 0a52.300 52.300 0 1 0 -104.600 0' });
// outer x, outer y, inner x, inner y, outer width (in thirds of a pixel)
const slices = [
  [298,48,322,180,4],[320,45,336,180,4],[375,42,368,195,6],[433,52,400,200,9],[650,233,560,270,4],[672,290,612,302,1.5],
  [659,465,515,415,8],[647,496,515,434,4],[609,555,489,461,12],[567,600,469,485,7],[484,653,427,513,10],[469,657,420,530,4],
  [453,662,410,518,9],[390,677,380,550,5],[323,673,338,550,5],[276,665,288,620,1.5],[210,638,268,530,5],[123,567,230,475,4],
  [113,555,233,461,9],[87,517,220,442,9],[45,411,140,396,3],[45,338,205,348,7],[113,163,180,213,3],[116,157,205,230,4],
  [153,121,242,222,5],[192,92,270,220,7],[202,87,275,218,5]
];
slices.forEach(([x1, y1, x2, y2, w]) => {
  const len = Math.hypot(x2 - x1, y2 - y1);
  const half = w * .42;
  const nx = -(y2 - y1) / len * half, ny = (x2 - x1) / len * half;
  const p = (x, y) => (380 + x / 3).toFixed(2) + ',' + (425 + y / 3).toFixed(2);
  add(doughnut, 'polygon', { class: 'slice', points: [p(x1 + nx, y1 + ny), p(x1 - nx, y1 - ny), p(x2 - nx * .15, y2 - ny * .15), p(x2 + nx * .15, y2 + ny * .15)].join(' ') });
});

const radar = document.getElementById('radar');
const cx = 979.4, cy = 451.6, step = 13.25;
const labels = ['gas','oil','consumption','market','gdp','war','production','export','battery','Unknown','biofuel','policy','economy','strategy','robot','growth','economic','energy','food','administration','unemployment','trade','demand','economic growth','industry','capital','worker','tension','terrorism','transport','peak oil','vehicle','tourist','artificial intellige','climate','power','crisis','ice','population','politics','business','work','coal','gamification','finance','interest rate','risk','aviation','asylum','resources','plastic','electronics','bank','gasoline','car','money','technology','aquaculture','city','investment','revenue','emission','climate change','infrastructure','government','security','software','building','transportation','wealth','clothing','shortage','debt','agriculture','tax','carbon','brexit','workforce','change','automaker','nuclear','3D','water','data','fossil fuel','election','greenhouse gas','information','shale gas','factory','farm','communication','tourism','consumer','material','Washington','politician','fracking'];
add(radar, 'rect', { class: 'swatch plain', x: 949, y: 231.5, width: 37.5, height: 10.5 });
add(radar, 'text', { class: 'legend', x: 991.7, y: 240 }, 'Intensity');

const n = labels.length;
const at = (i, r) => {
  const a = i / n * Math.PI * 2;
  return [cx + Math.sin(a) * r, cy - Math.cos(a) * r];
};
for (let v = 1; v <= 10; v++) {
  add(radar, 'polygon', { class: 'grid', points: labels.map((_, i) => at(i, v * step).join(',')).join(' ') });
}
labels.forEach((name, i) => {
  const [x, y] = at(i, step * 10);
  add(radar, 'line', { class: 'grid', x1: cx, y1: cy, x2: x, y2: y });
  const [lx, ly] = at(i, 145);
  const upper = i < n / 4 || i > n * .75;
  const anchor = i === 0 || i === n / 2 ? 'middle' : i < n / 2 ? 'start' : 'end';
  add(radar, 'text', { class: 'point-label', x: lx, y: ly + (upper ? -2.2 : 9), 'text-anchor': anchor }, name);
});

// data points measured from the plot's local origins
const left = [[506,274],[525,268],[551,311],[504,380],[492,386],[535,435],[327,447],[428,458],[406,552],[409,577],[411,590],[445,594],[448,602],[515,644],[550,630],[568,637],[591,643],[508,579],[518,559],[502,537],[527,611],[534,597],[536,473],[545,467],[544,486],[527,509],[519,526],[568,622],[583,625]];
const right = [[118,274],[117,324],[264,382],[247,450],[409,510],[146,527],[123,537],[303,628],[203,624],[198,635],[82,679],[88,729],[64,832],[69,460],[13,355],[41,355],[44,421],[10,470],[105,565],[103,573],[93,593],[80,606],[47,625],[22,642],[3,636],[28,625]];
const points = left.map(([x, y]) => [780 + x / 3, 270 + y / 3]).concat(right.map(([x, y]) => [970 + x / 3, 270 + y / 3]));
points.forEach(([x, y]) => {
  if (Math.hypot(x - cx, y - cy) > 40 && !(x > 990 && y < 425)) {
    add(radar, 'line', { class: 'spoke-shade', x1: cx, y1: cy, x2: x, y2: y });
  }
});
[[118,274],[117,324],[264,382],[264,382],[247,450]].forEach(([x, y], i) => {
  add(radar, 'line', { class: 'spike', x1: cx + (i % 2 ? 2 : -1), y1: cy, x2: 970 + x / 3, y2: 270 + y / 3 });
});

for (let v = 2; v <= 10; v++) {
  const y = cy - v * step, w = v === 10 ? 23 : 17.5;
  add(radar, 'rect', { class: 'tick-box', x: cx - w / 2, y: y - 7.4, width: w, height: v === 10 ? 14.8 : 12.9 });
  add(radar, 'text', { class: 'tick', x: cx, y: y + 3.4 }, v * 10);
}
points.forEach(([x, y]) => add(radar, 'circle', { class: 'dot', cx: x, cy: y, r: 2.8 }));

add(radar, 'circle', { class: 'core', cx, cy: cy + .4, r: 21.5 });
for (let i = 0; i < 52; i++) {
  const [x, y] = at(i * n / 52, 21.2);
  add(radar, 'circle', { class: 'core', cx: x, cy: y + .4, r: 2.5 });
}
[6, 10, 14.5, 19.5].forEach(r => add(radar, 'circle', { class: 'core-line', cx, cy, r }));
for (let i = 0; i < 26; i++) {
  const r = 4 + (i * 7 % 13);
  const [x, y] = at(i * 17, r);
  add(radar, 'circle', { class: 'core-line', cx: x, cy: y, r: 2.3 });
}
```
